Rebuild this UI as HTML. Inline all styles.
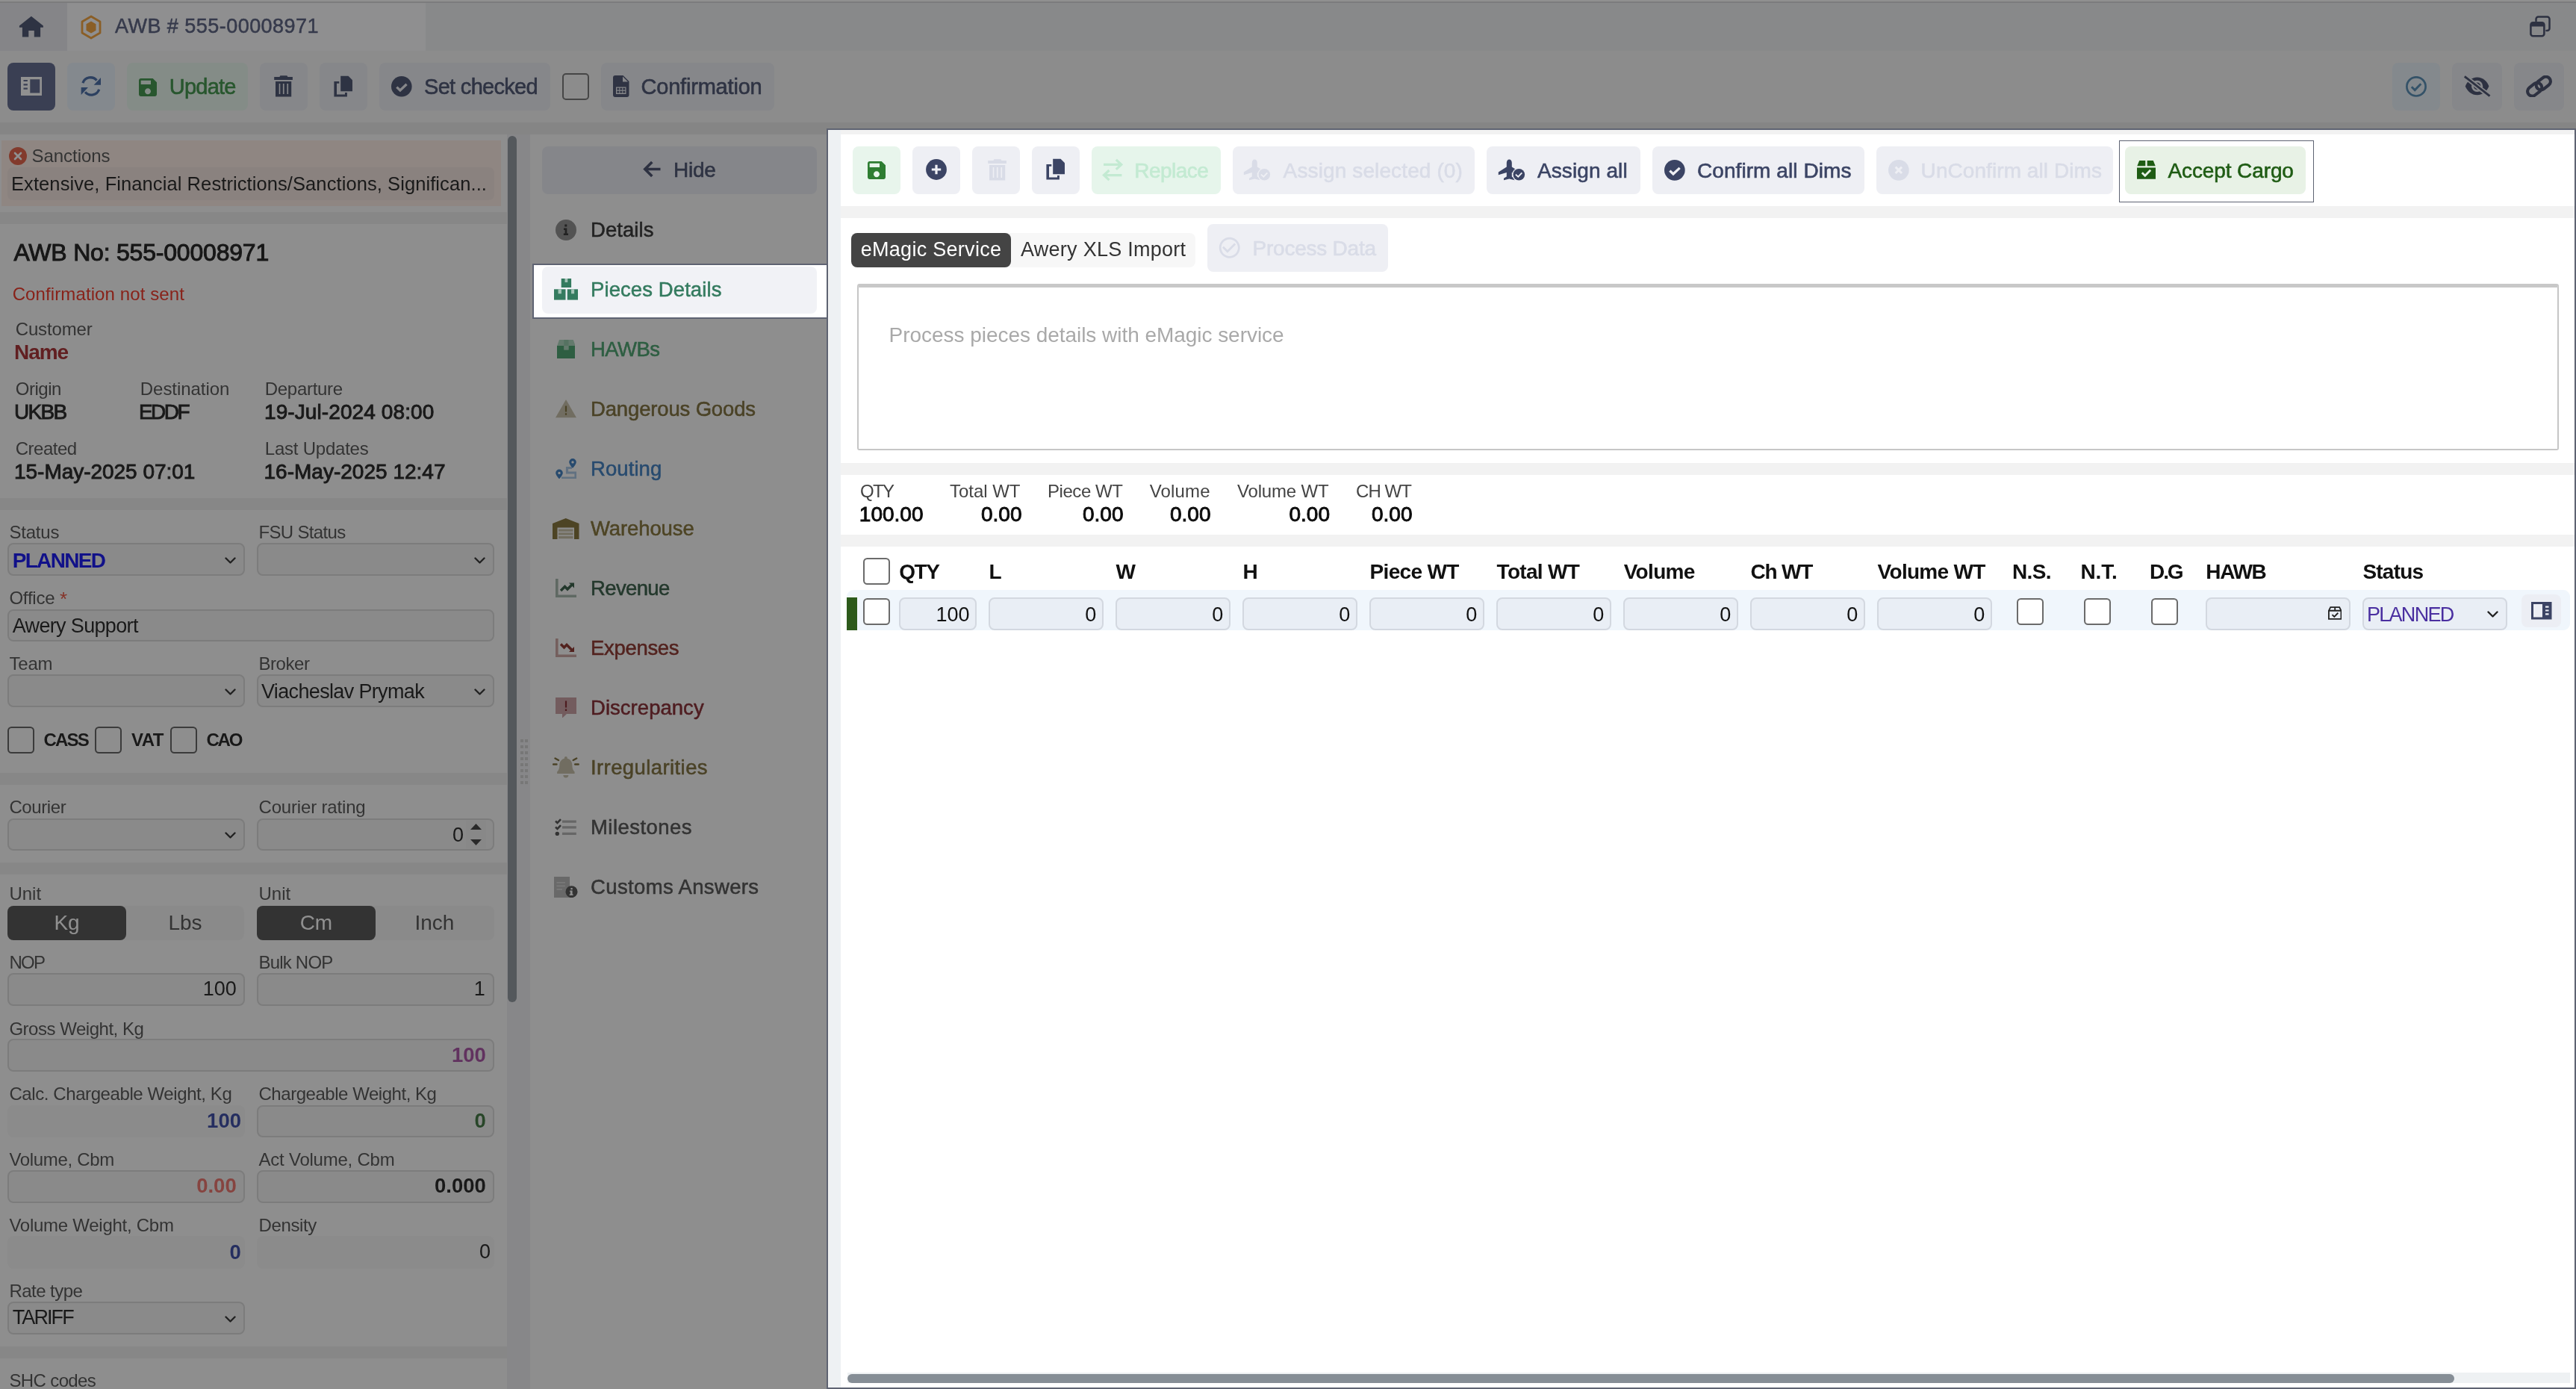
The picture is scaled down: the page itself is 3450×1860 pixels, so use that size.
<!DOCTYPE html>
<html><head><meta charset="utf-8"><title>AWB # 555-00008971</title>
<style>
html,body{margin:0;padding:0}
body{width:3450px;height:1860px;position:relative;overflow:hidden;background:#f7f7f7;font-family:"Liberation Sans",sans-serif}
.a{position:absolute;box-sizing:border-box;display:block}
.t{position:absolute;white-space:pre;display:block}
#base,#top{position:absolute;left:0;top:0;width:3450px;height:1860px;will-change:transform}
#ov{position:absolute;left:0;top:0;width:3450px;height:1860px;background:rgba(33,33,33,.5)}
</style></head>
<body>
<div id="base">
<div class="a" style="left:0.00px;top:0.00px;width:3450.00px;height:67.50px;background:#eff0f3;"></div>
<div class="a" style="left:0.00px;top:0.00px;width:3450.00px;height:2.20px;background:#ffffff;"></div>
<div class="a" style="left:0.00px;top:2.20px;width:3450.00px;height:1.80px;background:#d7d7d9;"></div>
<div class="a" style="left:0.00px;top:4.00px;width:90.00px;height:63.50px;background:#e8e9ee;"></div>
<div class="a" style="left:90.00px;top:4.00px;width:480.00px;height:63.50px;background:#fcfcfe;"></div>
<svg class="a" style="left:25.00px;top:21.00px;" width="34.00" height="29.00" viewBox="25 21 34 29"><path d="M41.900 21.800L57.900 34.500V36.800H54.100V49.400H45.800V40.900H38.300V49.400H29.900V36.800H25.900V34.500Z" fill="#3b4464"/></svg>
<svg class="a" style="left:107.00px;top:19.50px;" width="30.00" height="33.00" viewBox="0 0 30 33"><path d="M15 2 L27 9 V24 L15 31 L3 24 V9 Z" fill="none" stroke="#f39a2b" stroke-width="2.8" stroke-linejoin="round"/><path d="M15 8.5 L21.5 12.3 V20.7 L15 24.5 L8.5 20.7 V12.3 Z" fill="#f39a2b"/></svg>
<span class="t" style="left:154.00px;top:22.44px;font-size:27px;line-height:27px;color:#4a5275;letter-spacing:0.462px;-webkit-text-stroke:0.5px #4a5275;">AWB # 555-00008971</span>
<svg class="a" style="left:3386.00px;top:20.00px;" width="32.00" height="31.00" viewBox="0 0 32 31"><path d="M10.500 8V5.500a3 3 0 0 1 3-3H25.500a3 3 0 0 1 3 3V18a3 3 0 0 1-3 3H24.500" fill="none" stroke="#394060" stroke-width="2.500" stroke-linecap="round"/><rect x="3.400" y="10.200" width="18" height="18" rx="3" fill="none" stroke="#394060" stroke-width="2.600"/><path d="M3.400 10.200H21.400V15.500H3.400Z" fill="#394060"/></svg>
<div class="a" style="left:0.00px;top:67.50px;width:3450.00px;height:96.00px;background:#f7f7f7;"></div>
<div class="a" style="left:0.00px;top:163.50px;width:3450.00px;height:16.50px;background:#e9e9e9;"></div>
<div class="a" style="left:10.00px;top:84.00px;width:64.00px;height:64.00px;background:#535d85;border-radius:8px;"></div>
<div class="a" style="left:90.00px;top:84.00px;width:64.00px;height:64.00px;background:#e6f0fa;border-radius:8px;"></div>
<div class="a" style="left:170.00px;top:84.00px;width:162.00px;height:64.00px;background:#e6f7ec;border-radius:8px;"></div>
<div class="a" style="left:348.00px;top:84.00px;width:64.00px;height:64.00px;background:#eaecf3;border-radius:8px;"></div>
<div class="a" style="left:428.00px;top:84.00px;width:64.00px;height:64.00px;background:#eaecf3;border-radius:8px;"></div>
<div class="a" style="left:508.00px;top:84.00px;width:229.00px;height:64.00px;background:#eaecf3;border-radius:8px;"></div>
<div class="a" style="left:805.00px;top:84.00px;width:232.00px;height:64.00px;background:#eaecf3;border-radius:8px;"></div>
<svg class="a" style="left:27.90px;top:103.00px;" width="28.20" height="25.00" viewBox="0 0 28.2 25"><path d="M0 0H28.200V25H0Z M12.300 3.200V21.600H25.300V3.200Z M3.500 4H8.900V6.100H3.500Z M3.500 9.300H8.900V11.500H3.500Z M3.500 14.600H8.900V16.800H3.500Z" fill="#fff" fill-rule="evenodd"/></svg>
<svg class="a" style="left:108.00px;top:102.00px;" width="28.00" height="27.00" viewBox="0 0 28 27"><g fill="none" stroke="#375f9f" stroke-width="3.300"><path d="M2.900 9.100A10.900 10.900 0 0 1 21.500 5.600"/><path d="M24.700 17.700A10.900 10.900 0 0 1 6.100 21.200"/></g><path d="M27 1.900V11.850H17.650Z M0.650 24.900V14.950H9.950Z" fill="#375f9f"/></svg>
<svg class="a" style="left:182.00px;top:101.00px;" width="32.00" height="32.00" viewBox="0 0 24 24"><path d="M17 3H5c-1.11 0-2 .9-2 2v14c0 1.1.89 2 2 2h14c1.1 0 2-.9 2-2V7l-4-4zm-5 16c-1.66 0-3-1.34-3-3s1.34-3 3-3 3 1.34 3 3-1.34 3-3 3zm3-10H5V5h10v4z" fill="#2e8b3a" /></svg>
<span class="t" style="left:226.80px;top:102.05px;font-size:29px;line-height:29px;color:#2e8b3a;letter-spacing:-0.786px;-webkit-text-stroke:0.6px #2e8b3a;">Update</span>
<svg class="a" style="left:367.00px;top:101.00px;" width="25.00" height="29.00" viewBox="0 0 25 29"><path d="M8.400 0.200H17.400L18.400 1.900H24.900V5.900H0.200V1.900H7.400Z M2 7.900H23.200V28.400H2Z M6.700 11V25.100H8.300V11Z M11.900 11V25.100H13.600V11Z M17.400 11V25.100H19.100V11Z" fill="#3b4464" fill-rule="evenodd"/></svg>
<svg class="a" style="left:447.00px;top:101.00px;" width="25.20" height="29.00" viewBox="0 0 25.2 29"><path d="M9.200 0.800H19.500L25 6.300V21.300H9.200Z" fill="#3b4464"/><path d="M0.400 7.900H7.300V10.800H4V25.500H15V23H17.900V28.400H0.400Z" fill="#3b4464"/></svg>
<svg class="a" style="left:523.00px;top:100.80px;" width="29.60" height="29.60" viewBox="-14.8 -14.8 29.6 29.6"><circle r="13.8" fill="#3b4464"/><path d="M-6.48 0.80L-1.89 5.18L6.78 -2.99" fill="none" stroke="#eaecf3" stroke-width="3.29"/></svg>
<span class="t" style="left:568.00px;top:102.05px;font-size:29px;line-height:29px;color:#3b4464;letter-spacing:-0.692px;-webkit-text-stroke:0.6px #3b4464;">Set checked</span>
<div class="a" style="left:753.00px;top:98.00px;width:36.00px;height:36.00px;background:#f7f7f7;border-radius:5px;border:2.5px solid #6a6a6a;"></div>
<svg class="a" style="left:821.00px;top:101.00px;" width="21.50" height="29.00" viewBox="0 0 21.5 29"><path d="M3 0h10.5l8 8V26a3 3 0 0 1-3 3H3a3 3 0 0 1-3-3V3a3 3 0 0 1 3-3z M13 1.5v7h7z M4 15.5v9.5h13.5v-9.5z" fill="#3c4464" fill-rule="evenodd"/><path d="M5.3 16.8h3v2.6h-3z M9.3 16.8h3v2.6h-3z M13.3 16.8h3v2.6h-3z M5.3 20.8h3v2.6h-3z M9.3 20.8h3v2.6h-3z M13.3 20.8h3v2.6h-3z" fill="#3c4464"/></svg>
<span class="t" style="left:858.50px;top:102.05px;font-size:29px;line-height:29px;color:#3b4464;letter-spacing:-0.201px;-webkit-text-stroke:0.6px #3b4464;">Confirmation</span>
<div class="a" style="left:3204.00px;top:84.00px;width:64.00px;height:64.00px;background:#e6f1f8;border-radius:8px;"></div>
<div class="a" style="left:3284.20px;top:84.00px;width:66.80px;height:64.00px;background:#eaecf3;border-radius:8px;"></div>
<div class="a" style="left:3367.00px;top:84.00px;width:67.00px;height:64.00px;background:#eaecf3;border-radius:8px;"></div>
<svg class="a" style="left:3222.00px;top:101.60px;" width="28.00" height="28.00" viewBox="0 0 28 28"><circle cx="14" cy="13.900" r="12.600" fill="none" stroke="#4783af" stroke-width="2.700"/><path d="M7.800 14.200L12.200 18.600L20.300 10.300" fill="none" stroke="#4783af" stroke-width="2.900"/></svg>
<svg class="a" style="left:3299.00px;top:100.00px;" width="38.00" height="31.00" viewBox="0 0 38 31"><path d="M18.600 3.600C11 3.600 5.200 9 2.800 15.400C5.200 21.800 11 27.200 18.600 27.200S32 21.800 34.400 15.400C32 9 26.200 3.600 18.600 3.600Z" fill="#394060"/><circle cx="18.600" cy="15.400" r="7.600" fill="#eaecf3"/><circle cx="18.600" cy="15.400" r="4.800" fill="#394060"/><circle cx="16.200" cy="13.300" r="2.300" fill="#eaecf3"/><path d="M0 0.800L36.500 29.700" stroke="#eaecf3" stroke-width="6.500"/><path d="M1.800 2.300L35.500 28.700" stroke="#394060" stroke-width="2.900" stroke-linecap="butt"/></svg>
<svg class="a" style="left:3382.00px;top:101.00px;" width="37.00" height="29.00" viewBox="0 0 37 29"><g fill="none" stroke="#394060" stroke-width="4.100"><rect x="-10.500" y="-6.300" width="21" height="12.600" rx="6.300" transform="translate(24.300,10.600) rotate(-38)"/><rect x="-10.500" y="-6.300" width="21" height="12.600" rx="6.300" transform="translate(12.700,18.700) rotate(-38)"/></g></svg>
<div class="a" style="left:0.00px;top:180.00px;width:678.50px;height:1680.00px;background:#fbfbfb;"></div>
<div class="a" style="left:678.50px;top:180.00px;width:31.00px;height:1680.00px;background:#ecedf0;"></div>
<div class="a" style="left:680.00px;top:182.00px;width:12.00px;height:1160.00px;background:#868e96;border-radius:6px;"></div>
<div class="a" style="left:697.00px;top:990.00px;width:4.00px;height:4.00px;background:#cdcdcd;"></div>
<div class="a" style="left:703.00px;top:990.00px;width:4.00px;height:4.00px;background:#cdcdcd;"></div>
<div class="a" style="left:697.00px;top:997.97px;width:4.00px;height:4.00px;background:#cdcdcd;"></div>
<div class="a" style="left:703.00px;top:997.97px;width:4.00px;height:4.00px;background:#cdcdcd;"></div>
<div class="a" style="left:697.00px;top:1005.94px;width:4.00px;height:4.00px;background:#cdcdcd;"></div>
<div class="a" style="left:703.00px;top:1005.94px;width:4.00px;height:4.00px;background:#cdcdcd;"></div>
<div class="a" style="left:697.00px;top:1013.91px;width:4.00px;height:4.00px;background:#cdcdcd;"></div>
<div class="a" style="left:703.00px;top:1013.91px;width:4.00px;height:4.00px;background:#cdcdcd;"></div>
<div class="a" style="left:697.00px;top:1021.88px;width:4.00px;height:4.00px;background:#cdcdcd;"></div>
<div class="a" style="left:703.00px;top:1021.88px;width:4.00px;height:4.00px;background:#cdcdcd;"></div>
<div class="a" style="left:697.00px;top:1029.85px;width:4.00px;height:4.00px;background:#cdcdcd;"></div>
<div class="a" style="left:703.00px;top:1029.85px;width:4.00px;height:4.00px;background:#cdcdcd;"></div>
<div class="a" style="left:697.00px;top:1037.82px;width:4.00px;height:4.00px;background:#cdcdcd;"></div>
<div class="a" style="left:703.00px;top:1037.82px;width:4.00px;height:4.00px;background:#cdcdcd;"></div>
<div class="a" style="left:697.00px;top:1045.79px;width:4.00px;height:4.00px;background:#cdcdcd;"></div>
<div class="a" style="left:703.00px;top:1045.79px;width:4.00px;height:4.00px;background:#cdcdcd;"></div>
<div class="a" style="left:2.00px;top:188.00px;width:668.50px;height:88.00px;background:#fdebe3;"></div>
<div class="a" style="left:10.00px;top:224.00px;width:651.50px;height:43.50px;background:#f3e3dd;border-radius:7px;"></div>
<svg class="a" style="left:12.00px;top:197.00px;" width="24.00" height="24.00" viewBox="0 0 24 24"><circle cx="12" cy="12" r="12" fill="#e25336"/><path d="M8 8l8 8M16 8l-8 8" stroke="#fff" stroke-width="2.6" stroke-linecap="round"/></svg>
<span class="t" style="left:42.50px;top:197.48px;font-size:24px;line-height:24px;color:#454545;letter-spacing:-0.045px;">Sanctions</span>
<span class="t" style="left:15.00px;top:233.71px;font-size:25.5px;line-height:25.5px;color:#111;letter-spacing:0.084px;">Extensive, Financial Restrictions/Sanctions, Significan...</span>
<div class="a" style="left:0.00px;top:284.00px;width:678.50px;height:15.50px;background:#ededed;"></div>
<span class="t" style="left:18.40px;top:322.01px;font-size:32px;line-height:32px;color:#0c0c0c;letter-spacing:-0.205px;-webkit-text-stroke:1.0px #0c0c0c;">AWB No: 555-00008971</span>
<span class="t" style="left:16.70px;top:381.98px;font-size:24px;line-height:24px;color:#ee2211;letter-spacing:0.104px;">Confirmation not sent</span>
<span class="t" style="left:20.70px;top:428.68px;font-size:24px;line-height:24px;color:#454545;letter-spacing:-0.129px;">Customer</span>
<span class="t" style="left:19.00px;top:458.10px;font-size:28px;line-height:28px;color:#a01c20;font-weight:700;letter-spacing:-1.066px;">Name</span>
<span class="t" style="left:20.70px;top:508.98px;font-size:24px;line-height:24px;color:#454545;letter-spacing:-0.455px;">Origin</span>
<span class="t" style="left:187.80px;top:508.98px;font-size:24px;line-height:24px;color:#454545;letter-spacing:-0.043px;">Destination</span>
<span class="t" style="left:354.80px;top:508.98px;font-size:24px;line-height:24px;color:#454545;letter-spacing:-0.304px;">Departure</span>
<span class="t" style="left:19.00px;top:538.10px;font-size:28px;line-height:28px;color:#111;letter-spacing:-1.688px;-webkit-text-stroke:0.9px #111;">UKBB</span>
<span class="t" style="left:186.00px;top:538.10px;font-size:28px;line-height:28px;color:#111;letter-spacing:-2.559px;-webkit-text-stroke:0.9px #111;">EDDF</span>
<span class="t" style="left:354.00px;top:538.10px;font-size:28px;line-height:28px;color:#111;letter-spacing:0.098px;-webkit-text-stroke:0.9px #111;">19-Jul-2024 08:00</span>
<span class="t" style="left:20.70px;top:588.98px;font-size:24px;line-height:24px;color:#454545;letter-spacing:-0.484px;">Created</span>
<span class="t" style="left:354.80px;top:588.98px;font-size:24px;line-height:24px;color:#454545;letter-spacing:-0.227px;">Last Updates</span>
<span class="t" style="left:19.00px;top:618.10px;font-size:28px;line-height:28px;color:#111;letter-spacing:-0.031px;-webkit-text-stroke:0.9px #111;">15-May-2025 07:01</span>
<span class="t" style="left:353.50px;top:618.10px;font-size:28px;line-height:28px;color:#111;letter-spacing:0.010px;-webkit-text-stroke:0.9px #111;">16-May-2025 12:47</span>
<div class="a" style="left:0.00px;top:667.00px;width:678.50px;height:15.70px;background:#ededed;"></div>
<span class="t" style="left:12.40px;top:701.18px;font-size:24px;line-height:24px;color:#454545;letter-spacing:-0.208px;">Status</span>
<span class="t" style="left:346.50px;top:701.18px;font-size:24px;line-height:24px;color:#454545;letter-spacing:-0.672px;">FSU Status</span>
<div class="a" style="left:10.20px;top:727.20px;width:317.40px;height:43.60px;background:#f3f3f3;border-radius:8px;border:2.5px solid #d6d6d6;"></div>
<svg class="a" style="left:301.10px;top:745.70px;" width="15.00" height="9.00" viewBox="0 0 15 9"><path d="M1.500 1.500L7.500 7.500L13.500 1.500" fill="none" stroke="#222" stroke-width="2.4" stroke-linecap="round" stroke-linejoin="round"/></svg>
<div class="a" style="left:343.70px;top:727.20px;width:318.00px;height:43.60px;background:#f3f3f3;border-radius:8px;border:2.5px solid #d6d6d6;"></div>
<svg class="a" style="left:635.20px;top:745.70px;" width="15.00" height="9.00" viewBox="0 0 15 9"><path d="M1.500 1.500L7.500 7.500L13.500 1.500" fill="none" stroke="#222" stroke-width="2.4" stroke-linecap="round" stroke-linejoin="round"/></svg>
<span class="t" style="left:16.70px;top:737.20px;font-size:28px;line-height:28px;color:#0000f0;font-weight:700;letter-spacing:-1.678px;">PLANNED</span>
<span class="t" style="left:12.40px;top:789.28px;font-size:24px;line-height:24px;color:#454545;letter-spacing:-0.208px;">Office</span>
<span class="t" style="left:80.00px;top:789.29px;font-size:26px;line-height:26px;color:#e8432e;">*</span>
<div class="a" style="left:10.20px;top:815.50px;width:651.60px;height:43.60px;background:#f3f3f3;border-radius:8px;border:2.5px solid #d6d6d6;"></div>
<span class="t" style="left:16.70px;top:824.64px;font-size:27px;line-height:27px;color:#111;letter-spacing:-0.655px;">Awery Support</span>
<span class="t" style="left:12.40px;top:876.68px;font-size:24px;line-height:24px;color:#454545;letter-spacing:-0.172px;">Team</span>
<span class="t" style="left:346.50px;top:876.68px;font-size:24px;line-height:24px;color:#454545;letter-spacing:-0.448px;">Broker</span>
<div class="a" style="left:10.20px;top:903.30px;width:317.40px;height:43.60px;background:#f3f3f3;border-radius:8px;border:2.5px solid #d6d6d6;"></div>
<svg class="a" style="left:301.10px;top:921.80px;" width="15.00" height="9.00" viewBox="0 0 15 9"><path d="M1.500 1.500L7.500 7.500L13.500 1.500" fill="none" stroke="#222" stroke-width="2.4" stroke-linecap="round" stroke-linejoin="round"/></svg>
<div class="a" style="left:343.70px;top:903.30px;width:318.00px;height:43.60px;background:#f3f3f3;border-radius:8px;border:2.5px solid #d6d6d6;"></div>
<svg class="a" style="left:635.20px;top:921.80px;" width="15.00" height="9.00" viewBox="0 0 15 9"><path d="M1.500 1.500L7.500 7.500L13.500 1.500" fill="none" stroke="#222" stroke-width="2.4" stroke-linecap="round" stroke-linejoin="round"/></svg>
<span class="t" style="left:350.00px;top:912.64px;font-size:27px;line-height:27px;color:#111;letter-spacing:-0.653px;">Viacheslav Prymak</span>
<div class="a" style="left:10.20px;top:973.00px;width:35.50px;height:35.50px;background:#fbfbfb;border-radius:5.5px;border:2.5px solid #555;"></div>
<div class="a" style="left:127.30px;top:973.00px;width:35.50px;height:35.50px;background:#fbfbfb;border-radius:5.5px;border:2.5px solid #555;"></div>
<div class="a" style="left:228.20px;top:973.00px;width:35.50px;height:35.50px;background:#fbfbfb;border-radius:5.5px;border:2.5px solid #555;"></div>
<span class="t" style="left:58.50px;top:979.18px;font-size:24px;line-height:24px;color:#111;font-weight:700;letter-spacing:-1.797px;">CASS</span>
<span class="t" style="left:176.00px;top:979.18px;font-size:24px;line-height:24px;color:#111;font-weight:700;letter-spacing:-0.546px;">VAT</span>
<span class="t" style="left:276.60px;top:979.18px;font-size:24px;line-height:24px;color:#111;font-weight:700;letter-spacing:-2.315px;">CAO</span>
<div class="a" style="left:0.00px;top:1035.00px;width:678.50px;height:15.70px;background:#ededed;"></div>
<span class="t" style="left:12.40px;top:1069.28px;font-size:24px;line-height:24px;color:#454545;letter-spacing:-0.386px;">Courier</span>
<span class="t" style="left:346.50px;top:1069.28px;font-size:24px;line-height:24px;color:#454545;letter-spacing:-0.172px;">Courier rating</span>
<div class="a" style="left:10.20px;top:1095.50px;width:317.40px;height:43.60px;background:#f3f3f3;border-radius:8px;border:2.5px solid #d6d6d6;"></div>
<svg class="a" style="left:301.10px;top:1114.00px;" width="15.00" height="9.00" viewBox="0 0 15 9"><path d="M1.500 1.500L7.500 7.500L13.500 1.500" fill="none" stroke="#222" stroke-width="2.4" stroke-linecap="round" stroke-linejoin="round"/></svg>
<div class="a" style="left:343.70px;top:1095.50px;width:318.00px;height:43.60px;background:#f3f3f3;border-radius:8px;border:2.5px solid #d6d6d6;"></div>
<span class="t" style="left:605.97px;top:1104.94px;font-size:27px;line-height:27px;color:#111;">0</span>
<div class="a" style="left:624.00px;top:1098.50px;width:27.00px;height:37.50px;background:#efefef;"></div>
<svg class="a" style="left:629.50px;top:1102.50px;" width="15.00" height="8.00" viewBox="0 0 15 8"><path d="M7.500 0L15 8H0z" fill="#333"/></svg>
<svg class="a" style="left:629.50px;top:1123.50px;" width="15.00" height="8.00" viewBox="0 0 15 8"><path d="M7.500 8L15 0H0z" fill="#333"/></svg>
<div class="a" style="left:0.00px;top:1155.00px;width:678.50px;height:15.70px;background:#ededed;"></div>
<span class="t" style="left:12.40px;top:1185.18px;font-size:24px;line-height:24px;color:#454545;">Unit</span>
<span class="t" style="left:346.50px;top:1185.18px;font-size:24px;line-height:24px;color:#454545;">Unit</span>
<div class="a" style="left:10.00px;top:1212.80px;width:317.40px;height:45.80px;background:#f3f3f3;border-radius:8px;"></div>
<div class="a" style="left:10.00px;top:1212.80px;width:158.70px;height:45.80px;background:#444;border-radius:8px;"></div>
<div class="a" style="left:344.00px;top:1212.80px;width:318.00px;height:45.80px;background:#f3f3f3;border-radius:8px;"></div>
<div class="a" style="left:344.00px;top:1212.80px;width:158.80px;height:45.80px;background:#444;border-radius:8px;"></div>
<span class="t" style="left:72.38px;top:1221.60px;font-size:28px;line-height:28px;color:#fff;">Kg</span>
<span class="t" style="left:225.42px;top:1221.60px;font-size:28px;line-height:28px;color:#444;">Lbs</span>
<span class="t" style="left:401.63px;top:1221.60px;font-size:28px;line-height:28px;color:#fff;">Cm</span>
<span class="t" style="left:555.53px;top:1221.60px;font-size:28px;line-height:28px;color:#444;">Inch</span>
<span class="t" style="left:12.40px;top:1276.98px;font-size:24px;line-height:24px;color:#454545;letter-spacing:-1.672px;">NOP</span>
<span class="t" style="left:346.50px;top:1276.98px;font-size:24px;line-height:24px;color:#454545;letter-spacing:-0.797px;">Bulk NOP</span>
<div class="a" style="left:10.20px;top:1303.20px;width:317.40px;height:43.60px;background:#f3f3f3;border-radius:8px;border:2.5px solid #d6d6d6;"></div>
<div class="a" style="left:343.70px;top:1303.20px;width:318.00px;height:43.60px;background:#f3f3f3;border-radius:8px;border:2.5px solid #d6d6d6;"></div>
<span class="t" style="left:271.64px;top:1310.94px;font-size:27px;line-height:27px;color:#111;">100</span>
<span class="t" style="left:634.77px;top:1310.94px;font-size:27px;line-height:27px;color:#111;">1</span>
<span class="t" style="left:12.40px;top:1365.68px;font-size:24px;line-height:24px;color:#454545;letter-spacing:-0.478px;">Gross Weight, Kg</span>
<div class="a" style="left:10.20px;top:1391.10px;width:651.60px;height:43.60px;background:#f3f3f3;border-radius:8px;border:2.5px solid #d6d6d6;"></div>
<span class="t" style="left:604.91px;top:1398.52px;font-size:27.5px;line-height:27.5px;color:#a0429c;font-weight:700;">100</span>
<span class="t" style="left:12.40px;top:1453.08px;font-size:24px;line-height:24px;color:#454545;letter-spacing:-0.410px;">Calc. Chargeable Weight, Kg</span>
<span class="t" style="left:346.50px;top:1453.08px;font-size:24px;line-height:24px;color:#454545;letter-spacing:-0.463px;">Chargeable Weight, Kg</span>
<div class="a" style="left:10.20px;top:1479.50px;width:317.40px;height:43.60px;background:#f5f5f5;border-radius:8px;"></div>
<div class="a" style="left:343.70px;top:1479.50px;width:318.00px;height:43.60px;background:#f3f3f3;border-radius:8px;border:2.5px solid #d6d6d6;"></div>
<span class="t" style="left:277.11px;top:1486.62px;font-size:27.5px;line-height:27.5px;color:#283a9e;font-weight:700;">100</span>
<span class="t" style="left:635.50px;top:1486.62px;font-size:27.5px;line-height:27.5px;color:#2e6b30;font-weight:700;">0</span>
<span class="t" style="left:12.40px;top:1540.98px;font-size:24px;line-height:24px;color:#454545;letter-spacing:-0.324px;">Volume, Cbm</span>
<span class="t" style="left:346.50px;top:1540.98px;font-size:24px;line-height:24px;color:#454545;letter-spacing:-0.227px;">Act Volume, Cbm</span>
<div class="a" style="left:10.20px;top:1567.10px;width:317.40px;height:43.60px;background:#f3f3f3;border-radius:8px;border:2.5px solid #d6d6d6;"></div>
<div class="a" style="left:343.70px;top:1567.10px;width:318.00px;height:43.60px;background:#f3f3f3;border-radius:8px;border:2.5px solid #d6d6d6;"></div>
<span class="t" style="left:263.17px;top:1574.22px;font-size:27.5px;line-height:27.5px;color:#eb675f;font-weight:700;">0.00</span>
<span class="t" style="left:581.97px;top:1574.22px;font-size:27.5px;line-height:27.5px;color:#111;font-weight:700;">0.000</span>
<span class="t" style="left:12.40px;top:1629.18px;font-size:24px;line-height:24px;color:#454545;letter-spacing:-0.261px;">Volume Weight, Cbm</span>
<span class="t" style="left:346.50px;top:1629.18px;font-size:24px;line-height:24px;color:#454545;letter-spacing:-0.362px;">Density</span>
<div class="a" style="left:10.20px;top:1655.30px;width:317.40px;height:43.60px;background:#f5f5f5;border-radius:8px;"></div>
<div class="a" style="left:343.70px;top:1655.30px;width:318.00px;height:43.60px;background:#f5f5f5;border-radius:8px;"></div>
<span class="t" style="left:307.50px;top:1662.52px;font-size:27.5px;line-height:27.5px;color:#283a9e;font-weight:700;">0</span>
<span class="t" style="left:641.97px;top:1662.94px;font-size:27px;line-height:27px;color:#111;">0</span>
<span class="t" style="left:12.40px;top:1716.98px;font-size:24px;line-height:24px;color:#454545;letter-spacing:-0.526px;">Rate type</span>
<div class="a" style="left:10.20px;top:1743.10px;width:317.40px;height:43.60px;background:#f3f3f3;border-radius:8px;border:2.5px solid #d6d6d6;"></div>
<svg class="a" style="left:301.10px;top:1761.60px;" width="15.00" height="9.00" viewBox="0 0 15 9"><path d="M1.500 1.500L7.500 7.500L13.500 1.500" fill="none" stroke="#222" stroke-width="2.4" stroke-linecap="round" stroke-linejoin="round"/></svg>
<span class="t" style="left:16.70px;top:1751.14px;font-size:27px;line-height:27px;color:#111;letter-spacing:-1.897px;">TARIFF</span>
<div class="a" style="left:0.00px;top:1803.00px;width:678.50px;height:15.70px;background:#ededed;"></div>
<span class="t" style="left:12.40px;top:1837.18px;font-size:24px;line-height:24px;color:#454545;letter-spacing:-0.621px;">SHC codes</span>
<div class="a" style="left:709.50px;top:180.00px;width:400.00px;height:1680.00px;background:#fbfbfb;"></div>
<div class="a" style="left:726.00px;top:196.00px;width:368.00px;height:64.00px;background:#e9ebf3;border-radius:8px;"></div>
<svg class="a" style="left:861.00px;top:214.00px;" width="25.00" height="25.00" viewBox="0 0 25 25"><path d="M23.500 12.500H3.500M12.300 3L2.800 12.500L12.300 22" fill="none" stroke="#394060" stroke-width="3.600" stroke-linejoin="miter"/></svg>
<span class="t" style="left:902.00px;top:214.10px;font-size:28px;line-height:28px;color:#3b4464;letter-spacing:-0.273px;-webkit-text-stroke:0.6px #3b4464;">Hide</span>
<svg class="a" style="left:744.00px;top:293.50px;" width="28.00" height="28.00" viewBox="0 0 28 28"><circle cx="14" cy="14" r="14" fill="#858585"/><path d="M11 11.500h4.300v7h1.700v2.400H10.800v-2.400h1.800v-4.600H11z M12.300 6.500h3v3h-3z" fill="#222222"/></svg>
<span class="t" style="left:791.00px;top:293.82px;font-size:27.5px;line-height:27.5px;color:#222222;letter-spacing:0.062px;-webkit-text-stroke:0.55px #222222;">Details</span>
<svg class="a" style="left:745.70px;top:455.00px;" width="24.80" height="25.00" viewBox="0 0 24.8 25"><path d="M3 0H21.800L24.800 8.500H0Z" fill="#a6d2b8"/><rect x="0" y="8" width="24.800" height="17" fill="#3a9a62"/><rect x="9.300" y="0" width="6.200" height="13.500" fill="#89c2a1"/><rect x="9.300" y="8" width="6.200" height="5.500" fill="#a6d2b8"/></svg>
<span class="t" style="left:791.00px;top:453.82px;font-size:27.5px;line-height:27.5px;color:#3a9a62;letter-spacing:-0.547px;-webkit-text-stroke:0.55px #3a9a62;">HAWBs</span>
<svg class="a" style="left:744.00px;top:535.40px;" width="28.00" height="24.20" viewBox="0 0 28 24.2"><path d="M14 0L28 24.200H0Z" fill="#c0b9a0"/><path d="M12.900 8.500h2.200v8h-2.200z M12.900 18.300h2.200v2.400h-2.200z" fill="#73632b"/></svg>
<span class="t" style="left:791.00px;top:533.82px;font-size:27.5px;line-height:27.5px;color:#73632b;letter-spacing:-0.154px;-webkit-text-stroke:0.55px #73632b;">Dangerous Goods</span>
<svg class="a" style="left:743.90px;top:613.70px;" width="28.40" height="27.70" viewBox="0 0 28.4 27.7"><path d="M22 12.500H15.500V19H27V26H8" fill="none" stroke="#a0c0e0" stroke-width="3.200"/><path d="M23 0a4.800 4.800 0 0 1 4.800 4.800c0 3-4.800 8.200-4.800 8.200s-4.800-5.200-4.800-8.200A4.800 4.800 0 0 1 23 0z M23 3.200a1.700 1.700 0 1 0 0 3.400 1.700 1.700 0 0 0 0-3.400z" fill="#2d73bb" fill-rule="evenodd"/><path d="M5 14.500a4.800 4.800 0 0 1 4.800 4.800c0 3-4.800 8.200-4.800 8.200S.2 22.300.2 19.300A4.800 4.800 0 0 1 5 14.500z M5 17.700a1.700 1.700 0 1 0 0 3.400 1.700 1.700 0 0 0 0-3.400z" fill="#2d73bb" fill-rule="evenodd"/></svg>
<span class="t" style="left:791.00px;top:613.82px;font-size:27.5px;line-height:27.5px;color:#2d73bb;letter-spacing:0.072px;-webkit-text-stroke:0.55px #2d73bb;">Routing</span>
<svg class="a" style="left:740.20px;top:693.50px;" width="35.50" height="28.10" viewBox="0 0 35.5 28.1"><path d="M17.750 0L35.500 7V28.100H29V12.500H6.500V28.100H0V7Z" fill="#796727"/><path d="M8 14.500h19.500v3.200H8z M8 19.300h19.500v3.200H8z M8 24.100h19.500v3.200H8z" fill="#c3bb9e"/></svg>
<span class="t" style="left:791.00px;top:693.82px;font-size:27.5px;line-height:27.5px;color:#796727;letter-spacing:-0.112px;-webkit-text-stroke:0.55px #796727;">Warehouse</span>
<svg class="a" style="left:744.00px;top:775.00px;" width="28.00" height="25.10" viewBox="0 0 28 25.1"><path d="M0 0H3.600V21.500H28V25.100H0Z" fill="#9db0a5"/><path d="M7 16L12.500 10.500L16 14L22 8" fill="none" stroke="#254f37" stroke-width="3.400" stroke-linejoin="miter"/><path d="M18 5.500H25V12.500Z" fill="#254f37"/></svg>
<span class="t" style="left:791.00px;top:773.82px;font-size:27.5px;line-height:27.5px;color:#254f37;letter-spacing:-0.628px;-webkit-text-stroke:0.55px #254f37;">Revenue</span>
<svg class="a" style="left:744.00px;top:855.00px;" width="28.00" height="25.10" viewBox="0 0 28 25.1"><path d="M0 0H3.600V21.500H28V25.100H0Z" fill="#c79c98"/><path d="M7 7.500L11.500 12L15 8.500L22 15.500" fill="none" stroke="#83231b" stroke-width="3.400" stroke-linejoin="miter"/><path d="M25 11V18H18Z" fill="#83231b"/></svg>
<span class="t" style="left:791.00px;top:853.82px;font-size:27.5px;line-height:27.5px;color:#83231b;letter-spacing:-0.310px;-webkit-text-stroke:0.55px #83231b;">Expenses</span>
<svg class="a" style="left:744.00px;top:933.50px;" width="28.00" height="27.70" viewBox="0 0 28 27.7"><path d="M0 0H28V22H15L9 27.700V22H0Z" fill="#c4979a"/><path d="M12.900 4.500h2.200v9h-2.200z M12.900 15.500h2.200v2.500h-2.200z" fill="#7b171f"/></svg>
<span class="t" style="left:791.00px;top:933.82px;font-size:27.5px;line-height:27.5px;color:#7b171f;letter-spacing:0.035px;-webkit-text-stroke:0.55px #7b171f;">Discrepancy</span>
<svg class="a" style="left:740.00px;top:1013.20px;" width="35.70" height="28.60" viewBox="0 0 35.7 28.6"><path d="M17.850 0a2 2 0 0 1 2 2v.8c4 .9 6.500 4.400 6.500 8.700 0 4.500 1.300 7 3.200 9v2.500H6.150v-2.500c1.900-2 3.200-4.500 3.200-9 0-4.300 2.500-7.800 6.500-8.700V2a2 2 0 0 1 2-2z M14.350 25h7a3.500 3.500 0 0 1-7 0z" fill="#c0b9a0"/><g stroke="#73632b" stroke-width="2.400" stroke-linecap="round"><path d="M1 10.500H5.500"/><path d="M30.200 10.500H34.700"/><path d="M3.500 2.500L8 5"/><path d="M32.200 2.500L27.700 5"/></g></svg>
<span class="t" style="left:791.00px;top:1013.82px;font-size:27.5px;line-height:27.5px;color:#73632b;letter-spacing:0.406px;-webkit-text-stroke:0.55px #73632b;">Irregularities</span>
<svg class="a" style="left:743.40px;top:1095.70px;" width="28.80" height="23.50" viewBox="0 0 28.8 23.5"><path d="M10 2.500H28.800V5.700H10z M10 10.200H28.800v3.200H10z M10 18.800H28.800V22H10z" fill="#ababab"/><path d="M1 3.500L3.500 6L8 1.200 M1 11.500L3.500 14L8 9.200" fill="none" stroke="#454545" stroke-width="2.600"/><circle cx="3.300" cy="20.500" r="2.700" fill="#454545"/></svg>
<span class="t" style="left:791.00px;top:1093.82px;font-size:27.5px;line-height:27.5px;color:#454545;letter-spacing:0.455px;-webkit-text-stroke:0.55px #454545;">Milestones</span>
<svg class="a" style="left:742.30px;top:1173.50px;" width="31.50" height="28.10" viewBox="0 0 31.5 28.1"><path d="M0 0H21V28.100H0Z" fill="#b1b1b1"/><path d="M3.500 7H15V8.800H3.500z M3.500 11.500H15v1.800H3.500z M3.500 16H11v1.800H3.500z" fill="#d0d0d0"/><circle cx="23.500" cy="20.200" r="8" fill="#454545"/><path d="M21.600 18.500h3v5h1v1.600h-5v-1.600h1.200v-3.400h-1.200z M22.400 15h2.300v2.300h-2.300z" fill="#fbfbfb"/></svg>
<span class="t" style="left:791.00px;top:1173.82px;font-size:27.5px;line-height:27.5px;color:#454545;letter-spacing:0.361px;-webkit-text-stroke:0.55px #454545;">Customs Answers</span>
</div>
<div id="ov"></div>
<div id="top">
<div class="a" style="left:713.20px;top:353.40px;width:397.30px;height:73.60px;background:#fff;border:2px solid #5e6372;"></div>
<div class="a" style="left:726.00px;top:356.60px;width:368.00px;height:63.20px;background:#f1f2f6;border-radius:8px;"></div>
<svg class="a" style="left:741.80px;top:373.20px;" width="32.40" height="28.60" viewBox="0 0 32.4 28.6"><rect x="9.7" y="0" width="13.4" height="12" fill="#347b5f"/><rect x="14.524" y="0" width="3.7520000000000007" height="5.04" fill="#a4c4b7"/><rect x="0" y="14.3" width="15.5" height="14.3" fill="#347b5f"/><rect x="5.58" y="14.3" width="4.340000000000001" height="6.006" fill="#a4c4b7"/><rect x="17.8" y="14.3" width="14.6" height="14.3" fill="#347b5f"/><rect x="23.056" y="14.3" width="4.088" height="6.006" fill="#a4c4b7"/></svg>
<span class="t" style="left:791.00px;top:373.82px;font-size:27.5px;line-height:27.5px;color:#347b5f;letter-spacing:0.089px;-webkit-text-stroke:0.55px #347b5f;">Pieces Details</span>
<div class="a" style="left:1107.30px;top:172.00px;width:2342.70px;height:1688.00px;background:#f2f2f2;border:2.5px solid #5e6372;"></div>
<div class="a" style="left:1109.50px;top:174.30px;width:16.50px;height:1683.50px;background:#eef1f3;"></div>
<div class="a" style="left:1126.00px;top:180.00px;width:2321.50px;height:96.00px;background:#fff;"></div>
<div class="a" style="left:1126.00px;top:292.00px;width:2321.50px;height:328.00px;background:#fff;"></div>
<div class="a" style="left:1126.00px;top:636.00px;width:2321.50px;height:80.00px;background:#fff;"></div>
<div class="a" style="left:1126.00px;top:732.00px;width:2321.50px;height:1125.80px;background:#fff;"></div>
<div class="a" style="left:1142.00px;top:196.00px;width:64.00px;height:64.00px;background:#e8f5ec;border-radius:8px;"></div>
<svg class="a" style="left:1158.00px;top:211.50px;" width="32.00" height="32.00" viewBox="0 0 24 24"><path d="M17 3H5c-1.11 0-2 .9-2 2v14c0 1.1.89 2 2 2h14c1.1 0 2-.9 2-2V7l-4-4zm-5 16c-1.66 0-3-1.34-3-3s1.34-3 3-3 3 1.34 3 3-1.34 3-3 3zm3-10H5V5h10v4z" fill="#2e7d32" /></svg>
<div class="a" style="left:1222.00px;top:196.00px;width:64.00px;height:64.00px;background:#eeeff4;border-radius:8px;"></div>
<svg class="a" style="left:1239.00px;top:212.40px;" width="30.00" height="30.00" viewBox="-15 -15 30 30"><circle r="13.900" fill="#3b4464"/><path d="M-6.200 0H6.200M0 -6.200V6.200" stroke="#eeeff4" stroke-width="3.200"/></svg>
<div class="a" style="left:1302.00px;top:196.00px;width:64.00px;height:64.00px;background:#eeeff4;border-radius:8px;"></div>
<svg class="a" style="left:1322.50px;top:212.60px;" width="25.00" height="29.00" viewBox="0 0 25 29"><path d="M8.400 0.200H17.400L18.400 1.900H24.900V5.900H0.200V1.900H7.400Z M2 7.900H23.200V28.400H2Z M6.700 11V25.100H8.300V11Z M11.900 11V25.100H13.600V11Z M17.400 11V25.100H19.100V11Z" fill="#d9dce7" fill-rule="evenodd"/></svg>
<div class="a" style="left:1382.00px;top:196.00px;width:64.00px;height:64.00px;background:#eeeff4;border-radius:8px;"></div>
<svg class="a" style="left:1401.20px;top:212.30px;" width="25.20" height="29.00" viewBox="0 0 25.2 29"><path d="M9.200 0.800H19.500L25 6.300V21.300H9.200Z" fill="#3b4464"/><path d="M0.400 7.900H7.300V10.800H4V25.500H15V23H17.900V28.400H0.400Z" fill="#3b4464"/></svg>
<div class="a" style="left:1462.00px;top:196.00px;width:173.00px;height:64.00px;background:#e6f5eb;border-radius:8px;"></div>
<svg class="a" style="left:1476.00px;top:211.00px;" width="28.00" height="32.00" viewBox="0 0 28 32"><g fill="none" stroke="#c3ead2" stroke-width="3.300"><path d="M2 9.400H25.500M18.800 2.900L25.800 9.400L18.800 15.900"/><path d="M26.400 23.600H2.500M9.500 17L2.500 23.600L9.500 30.100"/></g></svg>
<span class="t" style="left:1519.30px;top:215.00px;font-size:28px;line-height:28px;color:#c3ead2;letter-spacing:-0.533px;-webkit-text-stroke:0.6px #c3ead2;">Replace</span>
<div class="a" style="left:1651.00px;top:196.00px;width:324.00px;height:64.00px;background:#eeeff4;border-radius:8px;"></div>
<svg class="a" style="left:1665.40px;top:212.00px;" width="38.00" height="31.00" viewBox="0 0 38 31"><path d="M15.300 1.400C13.300 1.400 11.800 3.500 11.800 6V11.500L0.800 18.600V22.300L11.800 19V24.500L8 26.800V29.300L15.300 27.600L22.600 29.300V26.800L18.800 24.500V19L29.800 22.300V18.600L18.800 11.500V6C18.800 3.500 17.300 1.400 15.300 1.400Z" fill="#d9dce7"/><circle cx="28.300" cy="21.750" r="9.100" fill="#eeeff4"/><circle cx="28.300" cy="21.750" r="7.800" fill="#d9dce7"/><path d="M23.900 21.600L27.300 24.700L32.300 19.400" fill="none" stroke="#eeeff4" stroke-width="1.900"/></svg>
<span class="t" style="left:1718.60px;top:215.00px;font-size:28px;line-height:28px;color:#d9dce7;letter-spacing:0.121px;-webkit-text-stroke:0.6px #d9dce7;">Assign selected (0)</span>
<div class="a" style="left:1991.00px;top:196.00px;width:206.00px;height:64.00px;background:#eeeff4;border-radius:8px;"></div>
<svg class="a" style="left:2006.00px;top:212.00px;" width="38.00" height="31.00" viewBox="0 0 38 31"><path d="M15.300 1.400C13.300 1.400 11.800 3.500 11.800 6V11.500L0.800 18.600V22.300L11.800 19V24.500L8 26.800V29.300L15.300 27.600L22.600 29.300V26.800L18.800 24.500V19L29.800 22.300V18.600L18.800 11.500V6C18.800 3.500 17.300 1.400 15.300 1.400Z" fill="#3b4464"/><circle cx="28.300" cy="21.750" r="9.100" fill="#eeeff4"/><circle cx="28.300" cy="21.750" r="7.800" fill="#3b4464"/><path d="M23.900 21.600L27.300 24.700L32.300 19.400" fill="none" stroke="#eeeff4" stroke-width="1.900"/></svg>
<span class="t" style="left:2059.00px;top:215.00px;font-size:28px;line-height:28px;color:#3b4464;letter-spacing:0.086px;-webkit-text-stroke:0.6px #3b4464;">Assign all</span>
<div class="a" style="left:2213.00px;top:196.00px;width:283.80px;height:64.00px;background:#eeeff4;border-radius:8px;"></div>
<svg class="a" style="left:2227.55px;top:212.75px;" width="29.70" height="29.70" viewBox="-14.85 -14.85 29.7 29.7"><circle r="13.85" fill="#3b4464"/><path d="M-6.50 0.80L-1.90 5.20L6.80 -3.00" fill="none" stroke="#eeeff4" stroke-width="3.30"/></svg>
<span class="t" style="left:2273.00px;top:215.00px;font-size:28px;line-height:28px;color:#3b4464;letter-spacing:0.071px;-webkit-text-stroke:0.6px #3b4464;">Confirm all Dims</span>
<div class="a" style="left:2513.20px;top:196.00px;width:316.50px;height:64.00px;background:#eeeff4;border-radius:8px;"></div>
<svg class="a" style="left:2527.75px;top:212.75px;" width="29.70" height="29.70" viewBox="-14.85 -14.85 29.7 29.7"><circle r="13.85" fill="#d9dce7"/><path d="M-4.20 -4.20L4.20 4.20M4.20 -4.20L-4.20 4.20" fill="none" stroke="#eeeff4" stroke-width="3.00"/></svg>
<span class="t" style="left:2572.60px;top:215.00px;font-size:28px;line-height:28px;color:#d9dce7;letter-spacing:0.069px;-webkit-text-stroke:0.6px #d9dce7;">UnConfirm all Dims</span>
<div class="a" style="left:2838.00px;top:187.70px;width:260.60px;height:83.00px;background:#fff;border:1.8px solid #5e6372;"></div>
<div class="a" style="left:2846.00px;top:196.00px;width:242.00px;height:64.00px;background:#e8f2e6;border-radius:8px;"></div>
<svg class="a" style="left:2862.00px;top:215.00px;" width="25.00" height="24.80" viewBox="0 0 25 24.8"><path d="M3.200 0H11.300V7.200H0.300Z M13.700 0H21.800L24.700 7.200H13.700Z M0 9.500H25V24.800H0Z" fill="#1f5c14"/><path d="M6.800 16.300l4 4 7.400-7.600" fill="none" stroke="#e8f2e6" stroke-width="2.800"/></svg>
<span class="t" style="left:2903.50px;top:215.30px;font-size:28px;line-height:28px;color:#1f5c14;letter-spacing:-0.112px;-webkit-text-stroke:0.6px #1f5c14;">Accept Cargo</span>
<div class="a" style="left:1140.00px;top:312.20px;width:460.70px;height:45.80px;background:#f7f7f7;border-radius:8px;"></div>
<div class="a" style="left:1140.00px;top:312.20px;width:214.00px;height:45.80px;background:#444;border-radius:8px;"></div>
<span class="t" style="left:1152.70px;top:321.04px;font-size:27px;line-height:27px;color:#fff;letter-spacing:0.287px;">eMagic Service</span>
<span class="t" style="left:1367.00px;top:321.04px;font-size:27px;line-height:27px;color:#333;letter-spacing:0.269px;">Awery XLS Import</span>
<div class="a" style="left:1617.00px;top:300.20px;width:241.80px;height:63.40px;background:#eeeff4;border-radius:8px;"></div>
<svg class="a" style="left:1630.00px;top:315.00px;" width="33.50" height="33.50" viewBox="0 0 24 24"><path d="M16.59 7.58L10 14.17l-3.59-3.58L5 12l5 5 8-8zM12 2C6.48 2 2 6.48 2 12s4.48 10 10 10 10-4.48 10-10S17.52 2 12 2zm0 18c-4.42 0-8-3.58-8-8s3.58-8 8-8 8 3.58 8 8-3.58 8-8 8z" fill="#d9dce7" /></svg>
<span class="t" style="left:1677.50px;top:318.60px;font-size:28px;line-height:28px;color:#d9dce7;letter-spacing:-0.232px;-webkit-text-stroke:0.6px #d9dce7;">Process Data</span>
<div class="a" style="left:1148.30px;top:380.20px;width:2279.20px;height:222.80px;background:#fff;border:2px solid #c6c6c6;border-top:5.5px solid #c8c8c8;border-radius:3px;"></div>
<span class="t" style="left:1190.60px;top:434.60px;font-size:28px;line-height:28px;color:#a9a9a9;letter-spacing:-0.040px;">Process pieces details with eMagic service</span>
<span class="t" style="left:1152.00px;top:645.58px;font-size:24px;line-height:24px;color:#444;letter-spacing:-1.615px;">QTY</span>
<span class="t" style="left:1150.86px;top:675.40px;font-size:28px;line-height:28px;color:#0c0c0c;-webkit-text-stroke:0.9px #0c0c0c;">100.00</span>
<span class="t" style="left:1272.00px;top:645.58px;font-size:24px;line-height:24px;color:#444;letter-spacing:-0.023px;">Total WT</span>
<span class="t" style="left:1314.00px;top:675.40px;font-size:28px;line-height:28px;color:#0c0c0c;-webkit-text-stroke:0.9px #0c0c0c;">0.00</span>
<span class="t" style="left:1403.00px;top:645.58px;font-size:24px;line-height:24px;color:#444;letter-spacing:-0.439px;">Piece WT</span>
<span class="t" style="left:1450.00px;top:675.40px;font-size:28px;line-height:28px;color:#0c0c0c;-webkit-text-stroke:0.9px #0c0c0c;">0.00</span>
<span class="t" style="left:1539.70px;top:645.58px;font-size:24px;line-height:24px;color:#444;letter-spacing:0.156px;">Volume</span>
<span class="t" style="left:1567.00px;top:675.40px;font-size:28px;line-height:28px;color:#0c0c0c;-webkit-text-stroke:0.9px #0c0c0c;">0.00</span>
<span class="t" style="left:1657.00px;top:645.58px;font-size:24px;line-height:24px;color:#444;letter-spacing:-0.170px;">Volume WT</span>
<span class="t" style="left:1726.50px;top:675.40px;font-size:28px;line-height:28px;color:#0c0c0c;-webkit-text-stroke:0.9px #0c0c0c;">0.00</span>
<span class="t" style="left:1816.00px;top:645.58px;font-size:24px;line-height:24px;color:#444;letter-spacing:-0.931px;">CH WT</span>
<span class="t" style="left:1837.00px;top:675.40px;font-size:28px;line-height:28px;color:#0c0c0c;-webkit-text-stroke:0.9px #0c0c0c;">0.00</span>
<div class="a" style="left:1156.00px;top:747.00px;width:36.00px;height:36.00px;background:#fff;border-radius:5.5px;border:2.5px solid #6b6b6b;"></div>
<span class="t" style="left:1204.30px;top:751.90px;font-size:28px;line-height:28px;color:#111;font-weight:700;letter-spacing:-1.521px;">QTY</span>
<span class="t" style="left:1324.50px;top:751.90px;font-size:28px;line-height:28px;color:#111;font-weight:700;letter-spacing:-2.609px;">L</span>
<span class="t" style="left:1494.50px;top:751.90px;font-size:28px;line-height:28px;color:#111;font-weight:700;letter-spacing:-2.438px;">W</span>
<span class="t" style="left:1664.50px;top:751.90px;font-size:28px;line-height:28px;color:#111;font-weight:700;letter-spacing:-1.734px;">H</span>
<span class="t" style="left:1834.60px;top:751.90px;font-size:28px;line-height:28px;color:#111;font-weight:700;letter-spacing:-0.686px;">Piece WT</span>
<span class="t" style="left:2004.60px;top:751.90px;font-size:28px;line-height:28px;color:#111;font-weight:700;letter-spacing:-0.703px;">Total WT</span>
<span class="t" style="left:2174.70px;top:751.90px;font-size:28px;line-height:28px;color:#111;font-weight:700;letter-spacing:-0.677px;">Volume</span>
<span class="t" style="left:2344.60px;top:751.90px;font-size:28px;line-height:28px;color:#111;font-weight:700;letter-spacing:-1.228px;">Ch WT</span>
<span class="t" style="left:2514.60px;top:751.90px;font-size:28px;line-height:28px;color:#111;font-weight:700;letter-spacing:-0.708px;">Volume WT</span>
<span class="t" style="left:2695.00px;top:751.90px;font-size:28px;line-height:28px;color:#111;font-weight:700;letter-spacing:-0.617px;">N.S.</span>
<span class="t" style="left:2786.60px;top:751.90px;font-size:28px;line-height:28px;color:#111;font-weight:700;letter-spacing:-0.195px;">N.T.</span>
<span class="t" style="left:2879.00px;top:751.90px;font-size:28px;line-height:28px;color:#111;font-weight:700;letter-spacing:-2.094px;">D.G</span>
<span class="t" style="left:2954.30px;top:751.90px;font-size:28px;line-height:28px;color:#111;font-weight:700;letter-spacing:-1.387px;">HAWB</span>
<span class="t" style="left:3164.40px;top:751.90px;font-size:28px;line-height:28px;color:#111;font-weight:700;letter-spacing:-0.763px;">Status</span>
<div class="a" style="left:1134.00px;top:789.80px;width:2307.70px;height:54.00px;background:#f0f6fc;border-radius:9px;"></div>
<div class="a" style="left:1134.00px;top:800.00px;width:14.00px;height:43.80px;background:#2d5a1b;"></div>
<div class="a" style="left:1156.00px;top:800.50px;width:36.00px;height:36.00px;background:#fff;border-radius:5.5px;border:2.5px solid #6b6b6b;"></div>
<div class="a" style="left:1204.20px;top:800.00px;width:103.80px;height:43.60px;background:#e9eef5;border-radius:8px;border:2.5px solid #d3d8e0;"></div>
<span class="t" style="left:1253.44px;top:809.54px;font-size:27px;line-height:27px;color:#111;">100</span>
<div class="a" style="left:1324.20px;top:800.00px;width:153.50px;height:43.60px;background:#e9eef5;border-radius:8px;border:2.5px solid #d3d8e0;"></div>
<span class="t" style="left:1453.17px;top:809.54px;font-size:27px;line-height:27px;color:#111;">0</span>
<div class="a" style="left:1494.20px;top:800.00px;width:153.50px;height:43.60px;background:#e9eef5;border-radius:8px;border:2.5px solid #d3d8e0;"></div>
<span class="t" style="left:1623.17px;top:809.54px;font-size:27px;line-height:27px;color:#111;">0</span>
<div class="a" style="left:1664.20px;top:800.00px;width:153.50px;height:43.60px;background:#e9eef5;border-radius:8px;border:2.5px solid #d3d8e0;"></div>
<span class="t" style="left:1793.17px;top:809.54px;font-size:27px;line-height:27px;color:#111;">0</span>
<div class="a" style="left:1834.30px;top:800.00px;width:153.50px;height:43.60px;background:#e9eef5;border-radius:8px;border:2.5px solid #d3d8e0;"></div>
<span class="t" style="left:1963.27px;top:809.54px;font-size:27px;line-height:27px;color:#111;">0</span>
<div class="a" style="left:2004.30px;top:800.00px;width:153.50px;height:43.60px;background:#e9eef5;border-radius:8px;border:2.5px solid #d3d8e0;"></div>
<span class="t" style="left:2133.27px;top:809.54px;font-size:27px;line-height:27px;color:#111;">0</span>
<div class="a" style="left:2174.40px;top:800.00px;width:153.50px;height:43.60px;background:#e9eef5;border-radius:8px;border:2.5px solid #d3d8e0;"></div>
<span class="t" style="left:2303.37px;top:809.54px;font-size:27px;line-height:27px;color:#111;">0</span>
<div class="a" style="left:2344.30px;top:800.00px;width:153.50px;height:43.60px;background:#e9eef5;border-radius:8px;border:2.5px solid #d3d8e0;"></div>
<span class="t" style="left:2473.27px;top:809.54px;font-size:27px;line-height:27px;color:#111;">0</span>
<div class="a" style="left:2514.30px;top:800.00px;width:153.50px;height:43.60px;background:#e9eef5;border-radius:8px;border:2.5px solid #d3d8e0;"></div>
<span class="t" style="left:2643.27px;top:809.54px;font-size:27px;line-height:27px;color:#111;">0</span>
<div class="a" style="left:2701.00px;top:801.00px;width:36.00px;height:36.00px;background:#fff;border-radius:5.5px;border:2.5px solid #6b6b6b;"></div>
<div class="a" style="left:2790.80px;top:801.00px;width:36.00px;height:36.00px;background:#fff;border-radius:5.5px;border:2.5px solid #6b6b6b;"></div>
<div class="a" style="left:2880.70px;top:801.00px;width:36.00px;height:36.00px;background:#fff;border-radius:5.5px;border:2.5px solid #6b6b6b;"></div>
<div class="a" style="left:2954.30px;top:800.00px;width:193.40px;height:43.60px;background:#e9eef5;border-radius:8px;border:2.5px solid #d3d8e0;"></div>
<svg class="a" style="left:3118.00px;top:812.40px;" width="18.40" height="18.00" viewBox="0 0 20 19.5"><path d="M3.500 1.200H16.500L19 6.200V18.300H1V6.200Z M1 6.200H19 M10 1.200V6.200" fill="none" stroke="#222" stroke-width="2"/><path d="M6 12l3 3 5.500-5.500" fill="none" stroke="#222" stroke-width="2"/></svg>
<div class="a" style="left:3164.40px;top:800.00px;width:193.40px;height:43.60px;background:#e9eef5;border-radius:8px;border:2.5px solid #d3d8e0;"></div>
<span class="t" style="left:3170.00px;top:809.54px;font-size:27px;line-height:27px;color:#4a2fa0;letter-spacing:-1.721px;">PLANNED</span>
<svg class="a" style="left:3330.50px;top:818.00px;" width="15.00" height="9.00" viewBox="0 0 15 9"><path d="M1.500 1.500L7.500 7.500L13.500 1.500" fill="none" stroke="#222" stroke-width="2.4" stroke-linecap="round" stroke-linejoin="round"/></svg>
<div class="a" style="left:3377.00px;top:795.50px;width:53.00px;height:44.50px;background:#eceef4;border-radius:8px;"></div>
<svg class="a" style="left:3390.00px;top:806.00px;" width="27.50" height="23.50" viewBox="0 0 27.5 23.5"><path d="M0 0H27.500V23.500H0Z M3 3V20.500H24.500V3Z" fill="#3c4464" fill-rule="evenodd"/><rect x="15" y="2" width="11" height="20" fill="#3c4464"/><path d="M19 5.500h4.500v2.200H19z M19 10.400h4.500v2.200H19z M19 15.300h4.500v2.200H19z" fill="#eceef4"/></svg>
<div class="a" style="left:1134.70px;top:1838.00px;width:2307.30px;height:14.00px;background:#eef1f3;"></div>
<div class="a" style="left:1134.70px;top:1840.00px;width:2152.20px;height:12.00px;background:#868e96;border-radius:6px;"></div>
</div>
</body></html>
